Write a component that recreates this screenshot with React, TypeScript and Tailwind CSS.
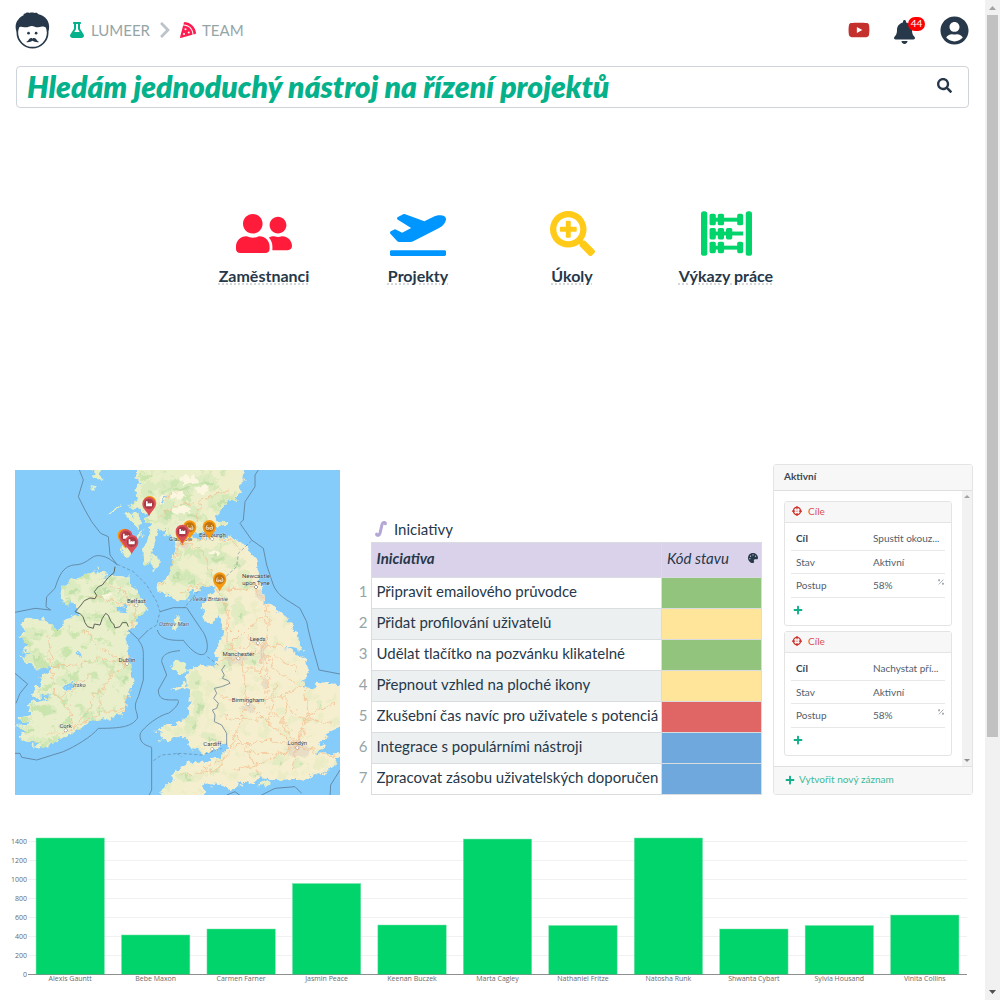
import React from 'react';
import {
  FaBell,
  FaChevronRight,
  FaFlask,
  FaPalette,
  FaPizzaSlice,
  FaPlaneDeparture,
  FaPlus,
  FaSearch,
  FaSearchPlus,
  FaUserCircle,
  FaUserFriends,
  FaYoutube,
  FaCrosshairs,
} from 'react-icons/fa';

function Logo() {
  return (
    <svg viewBox="46 40 106 112" className="h-[37px] w-[35px]" aria-hidden="true">
      <circle cx="99" cy="102" r="46" fill="#fff" stroke="#263849" strokeWidth="5" />
      <path
        d="M51 100C46 88 47 72 55 64C60 57 66 53 72 50C71 47 74 44 77 45C80 41 86 41 89 43C94 41 101 41 105 43C110 41 115 43 117 47C132 50 147 62 149 80C150 88 149 95 146 100L142 99C143 93 142 89 138 86C131 81 125 86 117 86C109 87 104 82 97 82C89 82 83 88 74 86C66 84 60 83 57 89C55 93 56 97 55 100Z"
        fill="#263849"
      />
      <circle cx="87" cy="104" r="4" fill="#263849" />
      <circle cx="110" cy="104" r="4" fill="#263849" />
      <path d="M80 131C87 129 88 119 95 119C98 119 98 121 99 121C100 121 100 119 104 119C111 119 112 129 119 131C111 133 103 129 99 127C95 129 88 133 80 131Z" fill="#263849" />
    </svg>
  );
}

function Abacus() {
  return (
    <svg viewBox="601 62 155 136" className="h-[45px] w-[51px]" fill="#00d46a" aria-hidden="true">
      <rect x="601" y="62" width="19" height="136" rx="8" />
      <rect x="737" y="62" width="19" height="136" rx="8" />
      {[70, 155].map((y) => (
        <g key={y}>
          <rect x="630" y={y + 12} width="98" height="12" />
          <rect x="627" y={y} width="19" height="35" rx="5" />
          <rect x="652" y={y} width="19" height="35" rx="5" />
          <rect x="711" y={y} width="18" height="35" rx="5" />
        </g>
      ))}
      <rect x="630" y="124" width="99" height="12" />
      <rect x="627" y="113" width="19" height="35" rx="5" />
      <rect x="652" y="113" width="19" height="35" rx="5" />
      <rect x="677" y="113" width="19" height="35" rx="5" />
    </svg>
  );
}

const shortcuts = [
  { label: 'Zaměstnanci', icon: <FaUserFriends className="h-[45px] w-[56px]" color="#ff1c3b" /> },
  { label: 'Projekty', icon: <FaPlaneDeparture className="h-[45px] w-[56px]" color="#0096ff" /> },
  { label: 'Úkoly', icon: <FaSearchPlus className="h-[45px] w-[45px]" color="#ffcb18" /> },
  { label: 'Výkazy práce', icon: <Abacus /> },
];

const greens = [
  [480, 50, 60, 26], [560, 35, 50, 22], [610, 90, 36, 20], [450, 120, 30, 40], [520, 130, 40, 22], [400, 60, 22, 30],
  [590, 260, 50, 26], [520, 330, 36, 22], [660, 280, 30, 18], [690, 330, 26, 30], [480, 310, 20, 28], [625, 400, 18, 26], [670, 430, 22, 34],
  [170, 355, 28, 24], [265, 360, 36, 14], [330, 340, 26, 12], [215, 440, 26, 18], [355, 440, 14, 12], [60, 490, 34, 18], [55, 560, 30, 22],
  [145, 630, 20, 16], [325, 620, 18, 30], [90, 680, 18, 9], [30, 780, 34, 12], [110, 720, 20, 12], [210, 730, 22, 10], [60, 810, 30, 10],
  [540, 630, 20, 28], [550, 700, 18, 42], [530, 760, 24, 26], [580, 800, 26, 14], [710, 570, 22, 20], [640, 560, 20, 40], [915, 705, 8, 16],
  [790, 875, 20, 18], [850, 880, 18, 12], [720, 915, 20, 10], [510, 920, 28, 12], [600, 905, 16, 8],
];
const highlands = [
  [525, 30, 30, 12], [490, 75, 20, 10], [500, 122, 30, 8], [560, 60, 18, 8], [440, 90, 12, 16], [275, 375, 12, 5], [600, 250, 16, 6],
];
const roads = [
  'M505 215L560 240L590 320L615 365L640 430L635 520L680 560L690 640L700 700L760 760L840 825',
  'M505 215L560 205L600 205L640 205L680 240', 'M505 215L470 280L440 350', 'M505 215L540 150L560 90L640 60', 'M620 360L720 355L750 390L760 460L750 540L760 640L750 700L830 780',
  'M615 360L560 340L500 370', 'M635 540L730 520L800 530', 'M610 570L670 560L730 540', 'M700 700L660 790L650 830L610 900L500 915', 'M650 830L760 810L845 830',
  'M845 830L830 900', 'M845 830L960 860', 'M845 830L870 740L960 700', 'M700 700L800 680L870 640', 'M700 700L620 680', 'M660 790L700 850L740 920',
  'M750 540L780 600L840 640', 'M690 600L760 600', 'M845 830L740 880L650 900', 'M845 830L800 760L810 700', 'M650 520L700 470L750 440', 'M700 500L740 530L740 640',
  'M335 580L260 565L180 585L110 590', 'M335 580L280 630L235 680L220 720L170 780', 'M335 580L345 540L350 480L365 410', 'M365 410L310 350L270 345', 'M365 410L290 390L220 380',
  'M335 580L250 530L200 470', 'M110 590L120 670L135 685', 'M135 685L230 610', 'M135 685L165 720L170 780L100 790', 'M170 780L260 725L330 730', 'M350 590L355 640L320 720',
  'M110 590L100 500', 'M255 720L260 670L290 610', 'M440 90L500 60', 'M430 150L470 110L540 100',
  'M780 560L850 600', 'M800 680L850 740L950 760', 'M620 740L700 750L780 740', 'M560 900L640 860', 'M780 640L760 760', 'M870 640L880 740L845 830', 'M700 850L800 850',
];
const borders = [
  'M192 -3L205 30L190 80L210 120L230 155L257 190L280 200L285 255L307 285C290 270 270 255 245 257C225 260 215 285 175 285C150 290 135 305 120 355L95 380L93 410L107 420L60 415L0 427',
  'M400 480L370 510C385 530 385 540 385 560L385 630L370 680C350 715 370 725 367 745C350 770 320 775 250 775C230 800 180 830 145 845L65 870L20 862L15 850H0',
  'M340 480L370 508', 'M0 610L38 642L15 670L3 700',
  'M427 480C435 505 455 512 505 511C550 570 577 560 577 530C577 500 560 480 560 480L515 413H475L435 425',
  'M495 542C450 545 440 560 440 575L455 615L430 660C430 690 450 690 480 690C500 685 490 710 460 730C430 735 375 780 375 795C375 820 390 825 410 832V960L400 980',
  'M732 -3L720 15V50L690 95L685 150L675 160L710 210L745 235L755 285L775 345C790 380 810 385 855 415L875 455L880 480L890 520L912 600L975 612',
  'M635 975L660 965L680 980', 'M730 980L780 955L840 950L860 970', 'M945 980L947 945L975 900',
  'M630 585L620 600L628 615L622 625L640 632L645 640L620 650L598 655L605 670L596 685L610 700L605 715L592 720L600 735L598 755L620 765L635 790V825',
];
const dashed = ['M307 283L355 305L395 345L425 395L435 425L425 465L400 480', 'M415 872L440 855L495 850L560 855L620 835', 'M710 212L670 250L665 290L610 340', 'M560 350L520 400L505 413', 'M577 560L610 585', 'M485 850L500 860'];
const cities = [
  { name: 'Belfast', x: 364, dot: [364, 406], ty: 399 },
  { name: 'Glasgow', x: 497, dot: [502, 220], ty: 213 },
  { name: 'Edinburgh', x: 592, dot: [592, 207], ty: 200 },
  { name: 'Newcastle', x: 723, dot: [723, 351], ty: 324 },
  { name: 'upon Tyne', x: 723, dot: [723, 351], ty: 344 },
  { name: 'Dublin', x: 336, dot: [336, 581], ty: 575 },
  { name: 'Cork', x: 152, dot: [152, 781], ty: 775 },
  { name: 'Leeds', x: 728, dot: [728, 519], ty: 512 },
  { name: 'Manchester', x: 670, dot: [670, 565], ty: 557 },
  { name: 'Birmingham', x: 699, dot: [699, 703], ty: 695 },
  { name: 'Cardiff', x: 592, dot: [592, 837], ty: 829 },
  { name: 'Londýn', x: 847, dot: [847, 833], ty: 826 },
];

function Pin({ x, y, kind }: { x: number; y: number; kind: 'factory' | 'glasses' | 'plain' }) {
  const red = kind === 'factory';
  return (
    <g transform={`translate(${x} ${y})`}>
      <path d="M0 35C-4 20 -20 14 -20 -3A20 20 0 0 1 20 -3C20 14 4 20 0 35Z" fill={red ? '#da4f58' : '#f7990f'} />
      <circle cx="0" cy="-2" r="15" fill={red ? '#a83945' : '#bd7411'} />
      {red && <path d="M-9 5V-10H-4V-3L2 -6V-3L9 -6V5Z" fill="#fff" />}
      {kind === 'glasses' && (
        <path d="M-6 -8L-10 -1M6 -8L10 -1M-10 0H-2V5H-9ZM10 0H2V5H9ZM-2 1H2" fill="none" stroke="#fff" strokeWidth="2" />
      )}
    </g>
  );
}

function MapView() {
  return (
    <svg viewBox="0 0 975 975" className="block w-full" role="img" aria-label="Mapa">
      <defs>
        <filter id="coast" x="-5%" y="-5%" width="110%" height="110%" colorInterpolationFilters="sRGB">
          <feTurbulence type="fractalNoise" baseFrequency="0.05" numOctaves="3" seed="4" />
          <feDisplacementMap in="SourceGraphic" scale="30" xChannelSelector="R" yChannelSelector="G" />
        </filter>
        <filter id="woods" x="0" y="0" width="100%" height="100%" colorInterpolationFilters="sRGB">
          <feTurbulence type="fractalNoise" baseFrequency="0.03" numOctaves="4" seed="11" />
          <feColorMatrix values="0 0 0 0 0.74  0 0 0 0 0.88  0 0 0 0 0.63  7 0 0 0 -3.9" />
        </filter>
        <linearGradient id="britain" x1="0" x2="1" y1="0" y2="0.4">
          <stop offset="0.2" stopColor="#e9efc9" />
          <stop offset="0.65" stopColor="#f6efcf" />
        </linearGradient>
        <linearGradient id="fade" x1="0" x2="1" y1="0" y2="0.5">
          <stop offset="0.4" stopColor="#fff" />
          <stop offset="0.75" stopColor="#444" />
        </linearGradient>
        <mask id="west" maskUnits="userSpaceOnUse" x="0" y="0" width="975" height="975">
          <rect width="975" height="975" fill="url(#fade)" />
        </mask>
        <clipPath id="land">
          <use href="#gb" />
          <use href="#ie" />
        </clipPath>
      </defs>
      <rect width="975" height="975" fill="#86ccfa" />
      <g filter="url(#coast)">
        <path
          id="gb"
          fill="url(#britain)"
          d="M373 -30L360 30L380 40L355 65L370 85L340 108L360 112L382 125L400 130L395 150L405 160L400 200L385 235L387 285L395 290L410 255L425 195L445 175L455 200L465 190L480 215L485 240L475 260L465 300L455 320L430 350L430 362L455 370L465 385L490 395L515 385L535 365L560 355L575 350L605 352L590 370L565 390L560 415L575 455L590 465L610 435L625 475L620 510L605 540L600 575L610 590L617 585L595 590L540 588L520 600L512 620L515 640L480 650L465 660L480 660L515 650L530 660L525 700L515 740L480 765L455 765L420 780L440 790L435 815L465 810L495 795L515 810L530 830L555 845L590 845L615 830L645 825L610 865L580 875L510 875L505 895L483 900L470 930L440 960L438 1000H565L568 945L610 940L645 958L665 945L690 935L720 940L735 920L780 930L880 925L930 905L970 880L973 850L900 850L930 830L910 820L940 800L935 790L1000 760V645L905 635L890 655L860 645L885 610L870 570L825 535L800 535L830 530L865 542L840 490L820 450L780 415L755 400L745 365L730 325L725 275L710 250L680 215L640 200L590 197L540 205L530 197L560 185L590 180L630 170L640 155L610 150L600 135L640 95L670 75L685 25L697 -30Z"
        />
        <path
          id="ie"
          fill="#e9efcb"
          d="M130 370L150 345L185 325L215 315L250 295L255 305L280 310L240 335L265 320L305 317L345 320L360 355L370 385L380 385L390 395L400 420L385 435L370 435L360 470L335 485L335 520L340 550L355 630L340 670L330 705V735L285 740L225 755L175 790L135 810L105 825L65 835L45 830L75 815L30 815L5 800L40 785L5 770L45 760L3 745L45 735L40 705L60 695L115 675L75 680L45 685L60 655L75 640L80 620L110 605L115 595L55 595L35 580L15 560L45 550L25 540L40 520L10 495L35 480L15 465L35 447L85 445L115 475L135 470L170 440L195 425L175 405L145 400Z"
        />
        <g fill="#e6efc6">
          <path d="M325 132L350 125L385 158L365 172L345 155Z" />
          <path d="M320 230L345 225L350 245L345 262L328 265L318 250Z" />
          <path d="M350 225L382 178L378 200L358 232Z" />
          <ellipse cx="417" cy="278" rx="14" ry="22" />
          <path d="M235 0H255L258 20L245 30L235 20Z" />
          <path d="M280 130L318 98L312 112L285 132Z" />
          <path d="M230 45L245 48L238 60Z" />
          <path d="M468 475L485 440L497 435L500 455L480 482Z" />
          <path d="M468 590L482 575L505 573L518 600L500 612L485 605Z" />
          <path d="M735 940L750 932L768 940L750 950Z" />
        </g>
        <g clipPath="url(#land)">
          <g mask="url(#west)">
            <rect width="975" height="975" filter="url(#woods)" opacity="0.7" />
          </g>
          {greens.map(([x, y, rx, ry]) => (
            <ellipse key={`${x}-${y}`} cx={x} cy={y} rx={rx} ry={ry} fill="#cde7b3" opacity="0.45" />
          ))}
          {greens.map(([x, y, rx, ry]) => (
            <ellipse key={`${x}-${y}`} cx={x + rx * 0.3} cy={y + ry * 0.3} rx={rx * 0.35} ry={ry * 0.3} fill="#b2d99c" opacity="0.6" />
          ))}
          {highlands.map(([x, y, rx, ry]) => (
            <ellipse key={`${x}-${y}`} cx={x} cy={y} rx={rx} ry={ry} fill="#fbf6df" />
          ))}
          <g fill="#e3d6c0" opacity="0.7">
            <ellipse cx="850" cy="838" rx="34" ry="24" />
            <ellipse cx="700" cy="712" rx="24" ry="12" />
            <ellipse cx="665" cy="568" rx="30" ry="13" />
            <ellipse cx="745" cy="550" rx="14" ry="32" />
            <ellipse cx="735" cy="375" rx="12" ry="18" />
            <ellipse cx="502" cy="222" rx="22" ry="10" />
            <ellipse cx="750" cy="640" rx="10" ry="20" />
          </g>
          <g fill="none" stroke="#f6c294" strokeWidth="3" opacity="0.85">
            {roads.map((d) => (
              <path key={d} d={d} />
            ))}
          </g>
        </g>
        <g fill="#86ccfa">
          <path d="M310 415L325 402L340 408L335 430L315 428Z" />
          <path d="M188 535L198 545L200 565L190 560Z" />
          <path d="M150 655L172 630L168 650L155 665Z" />
          <path d="M440 95L452 80L446 104Z" />
        </g>
      </g>
      <g fill="none" stroke="#53728a" strokeWidth="3" opacity="0.7" strokeLinejoin="round">
        {borders.map((d) => (
          <path key={d} d={d} />
        ))}
        {dashed.map((d) => (
          <path key={d} d={d} strokeDasharray="10 6" opacity="0.7" />
        ))}
      </g>
      <path
        d="M300 290L297 308L280 322L262 345L250 350L238 365L245 376L240 386L225 384L208 392L196 408L180 425L196 432L204 440L210 458L218 470L235 475L238 462L255 465L262 445L272 430L280 436L288 455L296 462L300 474L315 470L322 458L335 458L340 470"
        fill="none"
        stroke="#5d6658"
        strokeWidth="3"
        strokeLinejoin="round"
      />
      <g fontFamily='Roboto, "Liberation Sans", sans-serif' fontSize="18" textAnchor="middle" fill="#3c3c3c" stroke="#fff" strokeWidth="2" strokeOpacity="0.5" paintOrder="stroke">
        {cities.map((c) => (
          <g key={c.name}>
            <circle cx={c.dot[0]} cy={c.dot[1]} r="4" fill="#fff" stroke="#555" strokeWidth="2" strokeOpacity="1" />
            <text x={c.x} y={c.ty}>{c.name}</text>
          </g>
        ))}
        <g fontStyle="italic" fill="#50505e">
          <text x="585" y="394">Velká Británie</text>
          <text x="193" y="652">Irsko</text>
          <text x="477" y="467">Ostrov Man</text>
        </g>
      </g>
      <Pin x={404} y={101} kind="plain" />
      <Pin x={402} y={104} kind="factory" />
      <Pin x={328} y={199} kind="plain" />
      <Pin x={333} y={201} kind="factory" />
      <Pin x={350} y={218} kind="factory" />
      <Pin x={524} y={174} kind="glasses" />
      <Pin x={502} y={192} kind="plain" />
      <Pin x={502} y={187} kind="factory" />
      <Pin x={583} y={173} kind="glasses" />
      <Pin x={614} y={330} kind="glasses" />
    </svg>
  );
}

const initiatives = [
  { name: 'Připravit emailového průvodce', color: 'bg-[#93c47d]' },
  { name: 'Přidat profilování uživatelů', color: 'bg-[#ffe599]' },
  { name: 'Udělat tlačítko na pozvánku klikatelné', color: 'bg-[#93c47d]' },
  { name: 'Přepnout vzhled na ploché ikony', color: 'bg-[#ffe599]' },
  { name: 'Zkušební čas navíc pro uživatele s potenciá', color: 'bg-[#e06666]' },
  { name: 'Integrace s populárními nástroji', color: 'bg-[#6fa8dc]' },
  { name: 'Zpracovat zásobu uživatelských doporučen', color: 'bg-[#6fa8dc]' },
];

function InitiativesTable() {
  return (
    <section className="min-w-0 flex-1">
      <h2 className="flex h-[26px] items-center gap-[7px] pl-[19px] text-[15px]">
        <svg viewBox="0 0 12 16" className="h-4 w-3" fill="none" stroke="#b4a7d6" strokeWidth="3" strokeLinecap="round" aria-hidden="true">
          <path d="M10.400 2.800V2.200C10 1.200 7.600 1 7 3.600L5 12.200C4.400 14.800 1.800 14.800 1.600 13.600V13" />
        </svg>
        Iniciativy
      </h2>
      <table className="w-full table-fixed border-collapse text-left text-[15px]">
        <colgroup>
          <col className="w-[15px]" />
          <col />
          <col className="w-[100px]" />
        </colgroup>
        <thead>
          <tr className="h-[35px]">
            <th aria-label="Číslo" />
            <th className="border border-[#dadde0] bg-[#dad2ea] pb-1 pl-[5px] font-bold italic">Iniciativa</th>
            <th className="border border-[#dadde0] bg-[#dad2ea] pr-[3px] pb-1 pl-[5px] font-normal italic">
              <span className="flex items-center justify-between">
                Kód stavu
                <FaPalette size={10} />
              </span>
            </th>
          </tr>
        </thead>
        <tbody>
          {initiatives.map((row, i) => (
            <tr key={row.name} className="h-[31px]">
              <td className="pr-[3px] pb-1 text-right text-[#95a5a6]">{i + 1}</td>
              <td className={i % 2 ? 'border border-[#dadde0] bg-[#ecf0f1] pr-[2px] pb-1 pl-[5px]' : 'border border-[#dadde0] pr-[2px] pb-1 pl-[5px]'}>
                <div className="overflow-hidden whitespace-nowrap">{row.name}</div>
              </td>
              <td className={`border border-[#dadde0] ${row.color}`} />
            </tr>
          ))}
        </tbody>
      </table>
    </section>
  );
}

function GoalCard({ goal }: { goal: string }) {
  return (
    <article className="rounded-[3px] border border-[#e4e4e4] bg-white">
      <header className="flex h-[21px] items-center gap-1.5 border-b border-[#e4e4e4] bg-[#f7f7f7] pb-0.5 pl-[7px] text-[10px] text-[#d9534f]">
        <FaCrosshairs size={10} color="#d0312d" />
        Cíle
      </header>
      <dl className="px-1.5 pt-1 text-[10px] text-[#53606c]">
        <div className="flex h-[24px] items-center border-b border-[#e8e8e8] px-[5px]">
          <dt className="w-[77px] font-bold text-[#33424f]">Cíl</dt>
          <dd className="whitespace-nowrap">{goal}</dd>
        </div>
        <div className="flex h-[23px] items-center border-b border-[#e8e8e8] px-[5px]">
          <dt className="w-[77px]">Stav</dt>
          <dd>Aktivní</dd>
        </div>
        <div className="flex h-[24px] items-center border-b border-[#e8e8e8] pl-[5px]">
          <dt className="w-[77px]">Postup</dt>
          <dd>58%</dd>
          <svg viewBox="0 0 6 6" className="mr-px mb-2 ml-auto h-1.5 w-1.5" fill="none" stroke="#939ba1" strokeWidth="0.8" aria-hidden="true">
            <path d="M0.800 5.400L5.400 0.600" />
            <rect x="0.600" y="0.800" width="1" height="1" />
            <rect x="4.400" y="4.200" width="1" height="1" />
          </svg>
        </div>
      </dl>
      <button aria-label="Přidat" className="flex h-[27px] items-center pb-1 pl-2 text-[#10b08a]">
        <FaPlus size={10} />
      </button>
    </article>
  );
}

function ActiveColumn() {
  return (
    <section className="flex w-[200px] shrink-0 flex-col rounded-[3px] border border-[#e4e4e4] bg-white">
      <h2 className="flex h-[26px] items-center border-b border-[#dfdfdf] bg-[#f7f7f7] pb-0.5 pl-2.5 text-[10px] font-bold text-[#3c4853]">Aktivní</h2>
      <div className="flex flex-1">
        <div className="flex flex-1 flex-col gap-[5px] p-2.5">
          <GoalCard goal="Spustit okouz..." />
          <GoalCard goal="Nachystat pří..." />
        </div>
        <div className="flex w-[10px] flex-col items-center justify-between bg-[#f2f2f2] py-1">
          <svg viewBox="0 0 6 3" className="h-[3px] w-1.5" fill="#a3a3a3" aria-hidden="true"><path d="M0 3L3 0L6 3Z" /></svg>
          <svg viewBox="0 0 6 3" className="h-[3px] w-1.5" fill="#909090" aria-hidden="true"><path d="M0 0L3 3L6 0Z" /></svg>
        </div>
      </div>
      <button className="flex h-[28px] items-center gap-1 border-t border-[#e0e0e0] bg-[#f7f7f7] pb-0.5 pl-[11px] text-[10px] text-[#3dba98]">
        <FaPlus size={10} color="#10b08a" />
        Vytvořit nový záznam
      </button>
    </section>
  );
}

const people = [
  { name: 'Alexis Gauntt', value: 1437 },
  { name: 'Bebe Maxon', value: 416 },
  { name: 'Carmen Farner', value: 479 },
  { name: 'Jasmin Peace', value: 958 },
  { name: 'Keenan Buczek', value: 521 },
  { name: 'Marta Cagley', value: 1426 },
  { name: 'Nathaniel Fritze', value: 516 },
  { name: 'Natosha Runk', value: 1437 },
  { name: 'Shwanta Cybart', value: 479 },
  { name: 'Sylvia Housand', value: 516 },
  { name: 'Vinita Collins', value: 626 },
];
const ticks = [0, 200, 400, 600, 800, 1000, 1200, 1400];

function BarChart() {
  const base = 144;
  const start = 27.5;
  const step = 940 / 11;
  return (
    <svg viewBox="0 0 985 165" className="block w-full" role="img" aria-label="Výkazy práce podle zaměstnanců" fontFamily='"Open Sans", sans-serif' fontSize="7" fill="#6a6a6a">
      {ticks.map((t) => (
        <g key={t}>
          <rect x="28" y={Math.round(base - t * 0.095)} width="939" height="1" fill={t ? '#f1f1f1' : '#b5b5b5'} />
          <text x="27" y={Math.round(base - t * 0.095) + 3} textAnchor="end">{t}</text>
        </g>
      ))}
      {people.map((p, i) => {
        const x = start + step * i + step * 0.1;
        const h = p.value * 0.095;
        return (
          <g key={p.name}>
            <rect x={x} y={base + 0.5 - h} width={step * 0.8} height={h} fill="#00d46a" stroke="#7fe3af" strokeWidth="0.5" />
            <text x={x + step * 0.4} y="151" textAnchor="middle">{p.name}</text>
          </g>
        );
      })}
      <rect x="28" y={base} width="939" height="1" fill="#444" opacity="0.35" />
    </svg>
  );
}

export default function App() {
  return (
    <div className="flex min-h-screen bg-white font-['Lato',sans-serif] text-[#263849]">
      <div className="min-w-0 flex-1">
        <header className="flex h-[60px] items-center px-[15px]">
          <Logo />
          <nav className="ml-[19px] flex items-center text-[15px] text-[#95a5a6]" aria-label="Navigace">
            <a href="#lumeer" className="flex items-center gap-1.5">
              <FaFlask size={16} color="#04b18b" />
              LUMEER
            </a>
            <FaChevronRight size={18} className="mx-1.5" color="#bdc3cb" />
            <a href="#team" className="flex items-center gap-1.5">
              <FaPizzaSlice size={16} color="#ff1c51" />
              TEAM
            </a>
          </nav>
          <div className="ml-auto flex items-center pr-px">
            <button aria-label="YouTube"><FaYoutube size={22} color="#c4302b" /></button>
            <button aria-label="Oznámení" className="relative ml-6 pt-[3px]">
              <FaBell className="h-6 w-[21px]" />
              <span className="absolute top-0 left-3.5 flex h-3.5 w-[17px] items-center justify-center rounded-full bg-[#ff0000] text-[10px] text-white">44</span>
            </button>
            <button aria-label="Účet" className="ml-[25px]"><FaUserCircle size={29} /></button>
          </div>
        </header>

        <form className="mx-4 mt-1.5 flex h-[42px] items-center rounded border border-[#ced4da]" onSubmit={(e) => e.preventDefault()}>
          <input
            aria-label="Hledat"
            defaultValue="Hledám jednoduchý nástroj na řízení projektů"
            className="h-full min-w-0 flex-1 bg-transparent pb-0.5 pl-2.5 text-[30px] font-extrabold text-[#04b18b] italic outline-none"
          />
          <button aria-label="Vyhledat" className="px-4 pb-1"><FaSearch size={15} /></button>
        </form>

        <nav className="mt-[103px] flex justify-center pl-[5px]" aria-label="Zkratky">
          {shortcuts.map((s) => (
            <a key={s.label} href="#zkratka" className="flex w-[154px] flex-col items-center gap-2">
              {s.icon}
              <span className="text-base font-bold underline decoration-[#d3d7da] decoration-dotted decoration-2 underline-offset-1">{s.label}</span>
            </a>
          ))}
        </nav>

        <div className="mt-[176px] flex items-end pr-3 pl-[15px]">
          <div className="w-[325px] shrink-0"><MapView /></div>
          <div className="flex min-w-0 flex-1 pr-[11px] pl-4"><InitiativesTable /></div>
          <ActiveColumn />
        </div>

        <div className="mt-[35px]"><BarChart /></div>
      </div>

      <div className="flex min-h-full w-[15px] flex-col items-center bg-[#f1f1f1]" aria-hidden="true">
        <svg viewBox="0 0 15 15" className="h-[15px] w-[15px]" fill="#a3a3a3"><path d="M4 10L7.500 6L11 10Z" /></svg>
        <div className="w-[11px] flex-[722] bg-[#c1c1c1]" />
        <div className="flex-[248]" />
        <svg viewBox="0 0 15 15" className="h-[15px] w-[15px]" fill="#505050"><path d="M4 5L7.500 9L11 5Z" /></svg>
      </div>
    </div>
  );
}
